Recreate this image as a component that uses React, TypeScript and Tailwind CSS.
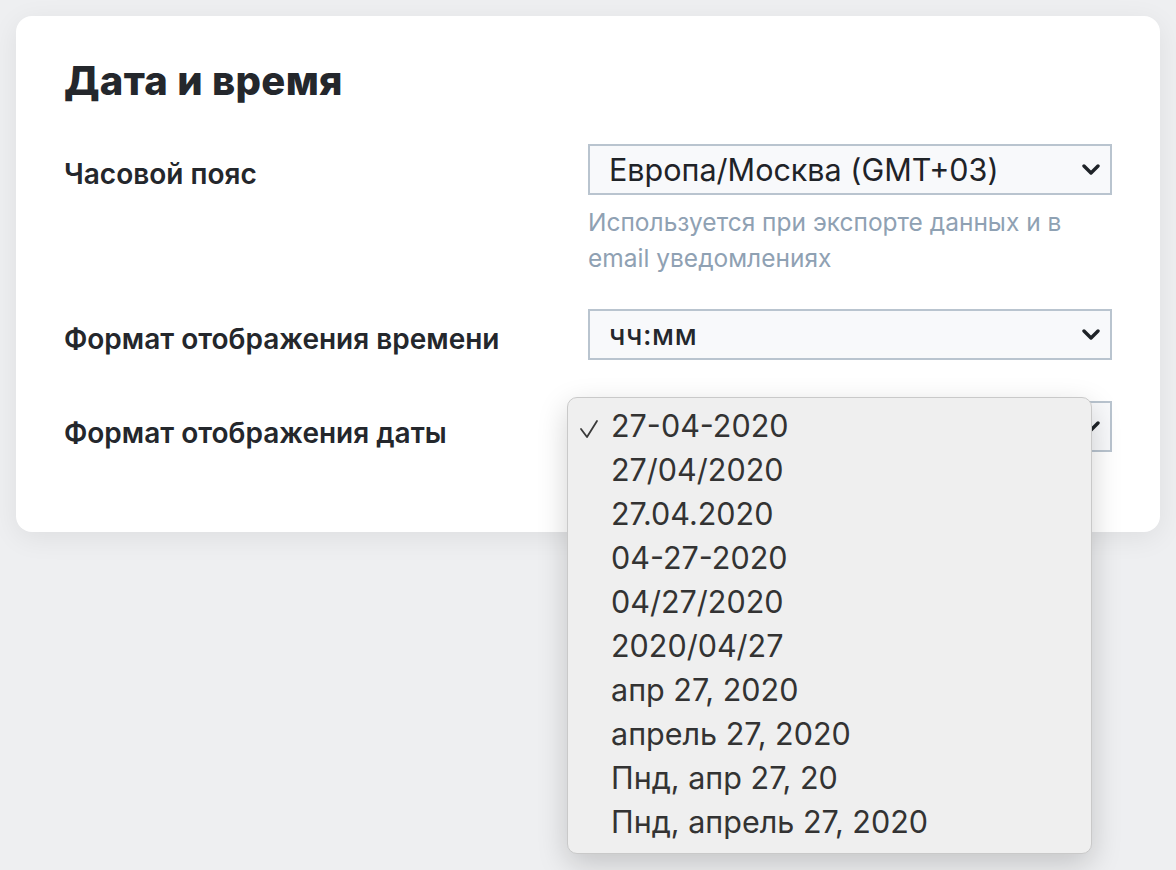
import React from "react";

const dateFormats = [
  "27-04-2020",
  "27/04/2020",
  "27.04.2020",
  "04-27-2020",
  "04/27/2020",
  "2020/04/27",
  "апр 27, 2020",
  "апрель 27, 2020",
  "Пнд, апр 27, 20",
  "Пнд, апрель 27, 2020",
];

function Chevron() {
  return (
    <svg width="18" height="11" viewBox="0 0 18 11" className="shrink-0">
      <polyline points="2,2 9,9 16,2" fill="none" stroke="#1f2328" strokeWidth="3.4" strokeLinecap="round" strokeLinejoin="round" />
    </svg>
  );
}

function Check() {
  return (
    <svg width="20" height="22" viewBox="0 0 20 22">
      <polyline points="2,11 8,19 18,3" fill="none" stroke="#3a3a3a" strokeWidth="1.8" strokeLinecap="round" strokeLinejoin="round" />
    </svg>
  );
}

function FakeSelect({ value, small }: { value: string; small?: boolean }) {
  return (
    <div className="h-[51px] border-2 border-[#b9c4cf] bg-[#f8f9fb] flex items-center justify-between pl-[19px] pr-[10px]">
      <span
        className={
          small
            ? "text-[28px] font-medium text-[#24272c] tracking-[0.6px]"
            : "text-[30.5px] text-[#1f2328]"
        }
      >
        {value}
      </span>
      <Chevron />
    </div>
  );
}

export default function App() {
  return (
    <div className="relative h-[870px] w-full bg-[#eeeff1] p-4 font-['Inter',sans-serif] overflow-hidden">
      <div className="rounded-2xl bg-white shadow-[0_6px_28px_rgba(0,0,0,0.07)] pl-12 pr-12 pt-[42px] pb-[80px]">
        <h1 className="text-[40px] leading-[46px] font-extrabold text-[#24272c] tracking-[0.3px]">Дата и время</h1>

        <div className="mt-[40px] grid grid-cols-2">
          <div className="h-[51px] flex items-center pt-2 text-[28px] font-semibold text-[#24272c]">Часовой пояс</div>
          <div>
            <FakeSelect value="Европа/Москва (GMT+03)" />
            <p className="mt-[9px] pr-8 text-[24.5px] leading-[36px] text-[#8fa1b3]">
              Используется при экспорте данных и в email уведомлениях
            </p>
          </div>
        </div>

        <div className="mt-[33px] grid grid-cols-2">
          <div className="h-[51px] flex items-center pt-2 text-[28px] font-semibold text-[#24272c]">Формат отображения времени</div>
          <FakeSelect value="чч:мм" small />
        </div>

        <div className="mt-[41px] grid grid-cols-2">
          <div className="h-[51px] flex items-center pt-3 text-[28px] font-semibold text-[#24272c]">Формат отображения даты</div>
          <FakeSelect value="27-04-2020" />
        </div>
      </div>

      <ul className="absolute left-[567px] top-[397px] w-[525px] h-[457px] rounded-[10px] border border-[#c9c9c9] bg-[#efefef] shadow-[0_10px_30px_rgba(0,0,0,0.18)] pt-[6px]">
        {dateFormats.map((f, i) => (
          <li key={f} className="relative h-[44px] flex items-center pl-[43px] text-[30.5px] text-[#333333]">
            {i === 0 && (
              <span className="absolute left-[11px] top-[3px] h-[44px] flex items-center">
                <Check />
              </span>
            )}
            {f}
          </li>
        ))}
      </ul>
    </div>
  );
}
